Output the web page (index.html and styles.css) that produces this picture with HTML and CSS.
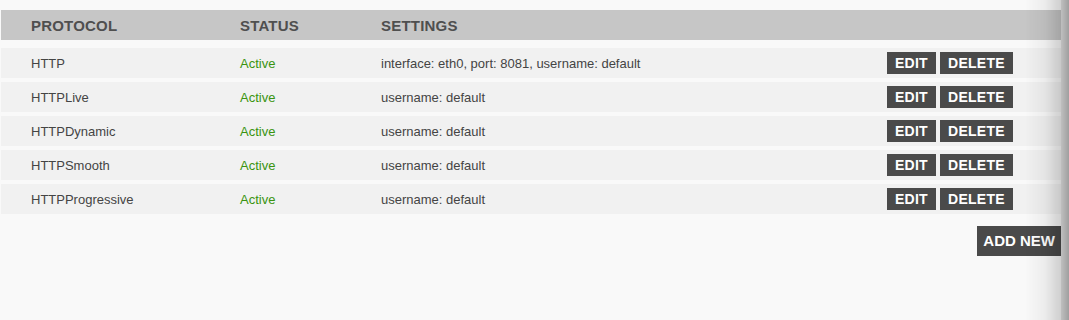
FILE: index.html
```html
<!DOCTYPE html>
<html lang="en">
<head>
  <meta charset="UTF-8">
  <title>Protocols</title>
  <link rel="stylesheet" href="styles.css">
</head>
<body>
  <div class="container">
    <div class="table">
      <div class="table-head">
        <div>PROTOCOL</div>
        <div>STATUS</div>
        <div>SETTINGS</div>
        <div></div>
      </div>

      <div class="table-row">
        <div>HTTP</div>
        <div class="active">Active</div>
        <div>interface: eth0, port: 8081, username: default</div>
        <div class="actions"><a class="btn">EDIT</a><a class="btn">DELETE</a></div>
      </div>
      <div class="table-row">
        <div>HTTPLive</div>
        <div class="active">Active</div>
        <div>username: default</div>
        <div class="actions"><a class="btn">EDIT</a><a class="btn">DELETE</a></div>
      </div>
      <div class="table-row">
        <div>HTTPDynamic</div>
        <div class="active">Active</div>
        <div>username: default</div>
        <div class="actions"><a class="btn">EDIT</a><a class="btn">DELETE</a></div>
      </div>
      <div class="table-row">
        <div>HTTPSmooth</div>
        <div class="active">Active</div>
        <div>username: default</div>
        <div class="actions"><a class="btn">EDIT</a><a class="btn">DELETE</a></div>
      </div>
      <div class="table-row">
        <div>HTTPProgressive</div>
        <div class="active">Active</div>
        <div>username: default</div>
        <div class="actions"><a class="btn">EDIT</a><a class="btn">DELETE</a></div>
      </div>
    </div>

    <div class="footer">
      <a class="btn btn-large">ADD NEW</a>
    </div>
  </div>

  <div class="edge-shadow"></div>
</body>
</html>
```

FILE: styles.css
```css
* {
  margin: 0;
  padding: 0;
  box-sizing: border-box;
  font-family: 'Liberation Sans', Arial, Helvetica, sans-serif;
}

html, body {
  height: 100%;
}

body {
  background-color: #f9f9f9;
  overflow: hidden;
}

.container {
  width: 1060px;
  margin-left: 1px;
  padding-top: 10px;
}

.table-head,
.table-row {
  display: grid;
  grid-template-columns: 209px 141px 1fr auto;
  align-items: center;
  height: 30px;
  padding: 0 48px 0 30px;
}

.table-head {
  background-color: #c6c6c6;
  color: #4f4f4f;
  font-size: 15px;
  font-weight: bold;
  letter-spacing: 0.2px;
  margin-bottom: 8px;
}

.table-row {
  background-color: #f1f1f1;
  color: #444444;
  font-size: 13px;
  margin-bottom: 4px;
}

.active {
  color: #3a9410;
}

.actions {
  display: flex;
  gap: 4px;
}

.btn {
  display: inline-block;
  background-color: #4a4a4a;
  color: #ffffff;
  font-size: 14px;
  font-weight: bold;
  letter-spacing: 0.3px;
  line-height: 22px;
  padding: 0 8px;
  cursor: pointer;
}

.footer {
  display: flex;
  justify-content: flex-end;
  margin-top: 12px;
}

.btn-large {
  font-size: 15px;
  letter-spacing: 0;
  line-height: 30px;
  padding: 0 6px;
}

.edge-shadow {
  position: fixed;
  top: 0;
  right: 0;
  width: 44px;
  height: 100%;
  pointer-events: none;
  background: linear-gradient(to right,
    rgba(0, 0, 0, 0) 0,
    rgba(0, 0, 0, 0.05) 20px,
    rgba(0, 0, 0, 0.17) 36px,
    rgba(0, 0, 0, 0.23) 36px,
    rgba(0, 0, 0, 0.36) 44px);
}
```
